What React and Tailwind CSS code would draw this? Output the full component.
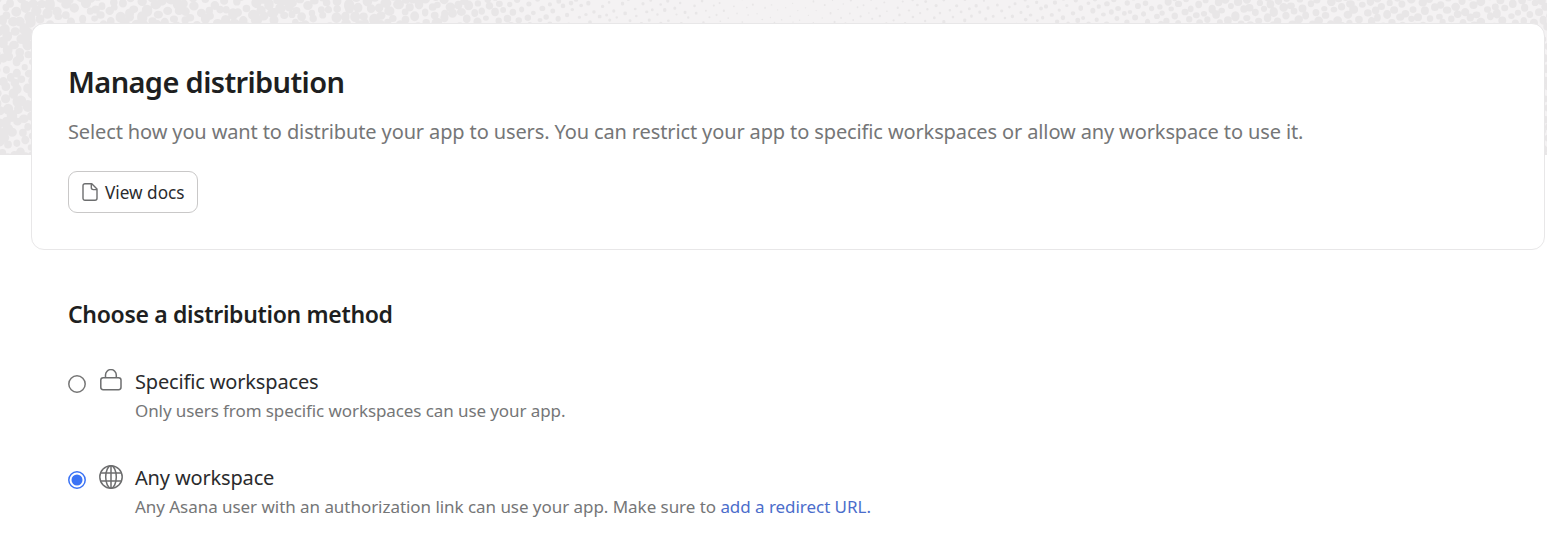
import React from 'react';

const clamp = (v, lo, hi) => Math.max(lo, Math.min(hi, v));

const noise = (a, b) => {
  const s = Math.sin(a * 127.1 + b * 311.7) * 43758.5453;
  return s - Math.floor(s);
};

// Dot radius across the banner: dense on the left, sparse centre, round dots on the right.
const radiusAt = (x, y) => {
  if (x < 440) return 4.5 + 0.6 * Math.sin((x + y * 1.4) / 17 - 2.2);
  if (x < 620) return 4.4 - ((x - 440) / 180) * 3.1;
  if (x < 980) return 1.1 + 0.4 * Math.cos((x - 620) / 57);
  return clamp(1.2 + ((x - 980) / 260) * 2.6, 1, 3.8);
};

function buildDots() {
  let d = '';
  const cos = Math.cos(-0.5);
  const sin = Math.sin(-0.5);
  for (let i = -60; i < 200; i++) {
    for (let j = -60; j < 140; j++) {
      const u = i * 8.9;
      const v = j * 8.9;
      const px = u * cos - v * sin;
      const py = u * sin + v * cos;
      const jitter = px < 500 ? 5.2 : 3.4;
      const x = px + (noise(i, j) - 0.5) * jitter;
      const y = py + (noise(j, i + 9) - 0.5) * jitter;
      if (x < -6 || x > 1553 || y < -6 || y > 161) continue;
      if (x > 38 && x < 1538 && y > 32) continue;
      const r = radiusAt(x, y) * (0.8 + noise(i + 3, j + 5) * 0.35);
      const t = r * (0.85 + noise(i + 7, j) * 0.25);
      d += `M${(x - r).toFixed(1)} ${y.toFixed(1)}a${r.toFixed(1)} ${t.toFixed(1)} 0 1 0 ${(2 * r).toFixed(1)} 0a${r.toFixed(1)} ${t.toFixed(1)} 0 1 0 ${(-2 * r).toFixed(1)} 0`;
    }
  }
  return d;
}

const dots = buildDots();

function Halftone() {
  return (
    <svg className="absolute left-0 top-0 h-[155px] w-[1547px] bg-[#f4f2f3]" viewBox="0 0 1547 155" aria-hidden="true">
      <path d={dots} fill="#e8e6e7" />
    </svg>
  );
}

function FileIcon() {
  return (
    <svg className="h-[18px] w-4 shrink-0" viewBox="0 0 16 18" fill="none" stroke="#6d6e6f" strokeWidth="1.4" strokeLinejoin="round">
      <path d="M3 .75h6.8l5.2 5.2v9.3a2 2 0 0 1-2 2H3a2 2 0 0 1-2-2V2.75a2 2 0 0 1 2-2Z" />
      <path d="M9.3 1v3.6a2 2 0 0 0 2 2H15" />
    </svg>
  );
}

function LockIcon() {
  return (
    <svg className="h-6 w-6" viewBox="0 0 24 24" fill="none" stroke="#6d6e6f" strokeWidth="1.5">
      <rect x="1.8" y="8.7" width="20.2" height="12" rx="2.4" />
      <path d="M6.5 8.7V6a5.4 5.4 0 0 1 10.8 0v2.7" />
    </svg>
  );
}

function GlobeIcon() {
  return (
    <svg className="h-6 w-6" viewBox="0 0 24 24" fill="none" stroke="#6d6e6f" strokeWidth="1.5">
      <circle cx="12" cy="12" r="11.2" />
      <ellipse cx="12" cy="12" rx="5.3" ry="11.2" />
      <path d="M12 .8v22.4M1.8 8h20.4M1.8 16h20.4" />
    </svg>
  );
}

function RadioMark() {
  return (
    <svg className="mt-[15px] h-[18px] w-[18px] shrink-0 text-[#767676] peer-checked:text-[#3b73f5] [&>.dot]:opacity-0 peer-checked:[&>.dot]:opacity-100" viewBox="0 0 18 18">
      <circle cx="9" cy="9" r="8.2" fill="none" stroke="currentColor" strokeWidth="1.5" />
      <circle className="dot" cx="9" cy="9" r="5.5" fill="currentColor" />
    </svg>
  );
}

function Option({ checked, icon, title, children }) {
  return (
    <label className="flex h-24 items-start">
      <input type="radio" name="method" defaultChecked={checked} className="peer sr-only" />
      <RadioMark />
      <span className="ml-[13px] mt-[9px] flex h-6 w-6 shrink-0">{icon}</span>
      <span className="ml-3 flex flex-col whitespace-nowrap">
        <span className="mt-2 h-7 self-start text-[20px] leading-7 tracking-[-0.16px] text-[#2a2b2d]">{title}</span>
        {children}
      </span>
    </label>
  );
}

export default function App() {
  return (
    <div className="relative h-[547px] w-full overflow-hidden bg-white font-['Noto_Sans','Open_Sans',sans-serif]">
      <Halftone />
      <main className="relative pl-[31px] pr-[2px] pt-[23px]">
        <section className="flex h-[227px] flex-col items-start whitespace-nowrap rounded-[13px] border border-[#e8e7e8] bg-white pl-9 pt-[38px]">
          <h1 className="h-10 text-[29px] font-semibold leading-10 tracking-[-0.63px] text-[#1e1f21]">Manage distribution</h1>
          <p className="mt-4 h-7 text-[20px] leading-7 tracking-[-0.125px] text-[#757677]">
            Select how you want to distribute your app to users. You can restrict your app to specific workspaces or allow any workspace to use it.
          </p>
          <button className="mt-[25px] flex h-[42px] w-[130px] items-center gap-[7px] rounded-[9px] border border-[#c9c8c8] bg-white pl-[13px]">
            <FileIcon />
            <span className="pt-px text-[17.2px] leading-6 text-[#2a2b2d]">View docs</span>
          </button>
        </section>
        <section className="flex flex-col items-start pl-[37px] pt-[48px]">
          <h2 className="h-8 whitespace-nowrap text-[23px] font-semibold leading-8 tracking-[-0.33px] text-[#1e1f21]">Choose a distribution method</h2>
          <div className="mt-[30px] flex flex-col">
            <Option icon={<LockIcon />} title="Specific workspaces">
              <span className="mt-[3px] h-6 self-start text-[17px] leading-6 tracking-[-0.09px] text-[#757677]">Only users from specific workspaces can use your app.</span>
            </Option>
            <Option checked icon={<GlobeIcon />} title="Any workspace">
              <span className="mt-[3px] h-6 self-start text-[17px] leading-6 tracking-[-0.045px] text-[#757677]">
                Any Asana user with an authorization link can use your app. Make sure to <a href="#redirect" className="text-[#4b6dcb]">add a redirect URL</a><span className="text-[#4b6dcb]">.</span>
              </span>
            </Option>
          </div>
        </section>
      </main>
    </div>
  );
}
